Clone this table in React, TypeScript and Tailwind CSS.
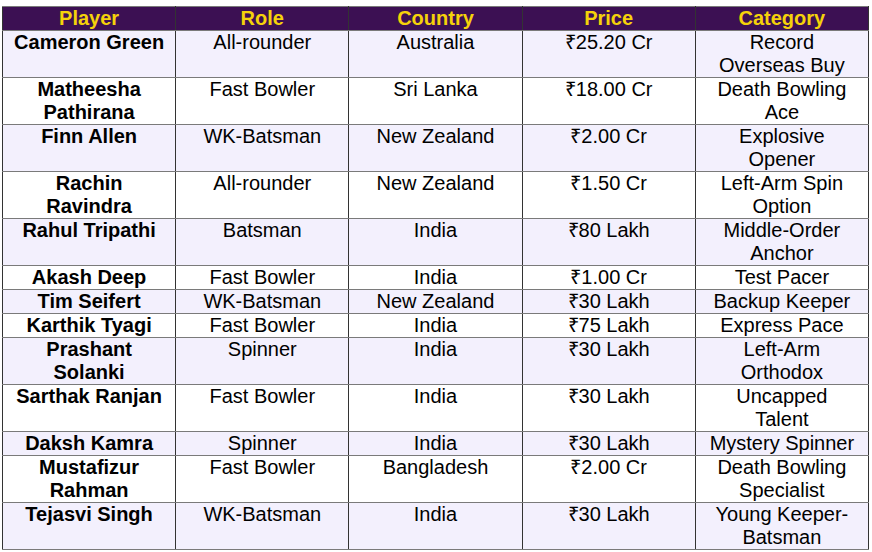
const rows: [string, string, string, string, string][] = [
  ['Cameron Green', 'All-rounder', 'Australia', '₹25.20 Cr', 'Record Overseas Buy'],
  ['Matheesha Pathirana', 'Fast Bowler', 'Sri Lanka', '₹18.00 Cr', 'Death Bowling Ace'],
  ['Finn Allen', 'WK-Batsman', 'New Zealand', '₹2.00 Cr', 'Explosive Opener'],
  ['Rachin Ravindra', 'All-rounder', 'New Zealand', '₹1.50 Cr', 'Left-Arm Spin Option'],
  ['Rahul Tripathi', 'Batsman', 'India', '₹80 Lakh', 'Middle-Order Anchor'],
  ['Akash Deep', 'Fast Bowler', 'India', '₹1.00 Cr', 'Test Pacer'],
  ['Tim Seifert', 'WK-Batsman', 'New Zealand', '₹30 Lakh', 'Backup Keeper'],
  ['Karthik Tyagi', 'Fast Bowler', 'India', '₹75 Lakh', 'Express Pace'],
  ['Prashant Solanki', 'Spinner', 'India', '₹30 Lakh', 'Left-Arm Orthodox'],
  // the reference wraps this one although it would just fit
  ['Sarthak Ranjan', 'Fast Bowler', 'India', '₹30 Lakh', 'Uncapped\nTalent'],
  ['Daksh Kamra', 'Spinner', 'India', '₹30 Lakh', 'Mystery Spinner'],
  ['Mustafizur Rahman', 'Fast Bowler', 'Bangladesh', '₹2.00 Cr', 'Death Bowling Specialist'],
  ['Tejasvi Singh', 'WK-Batsman', 'India', '₹30 Lakh', 'Young Keeper-Batsman'],
];

const headers = ['Player', 'Role', 'Country', 'Price', 'Category'];

export default function App() {
  return (
    <div className="min-h-screen bg-white pl-[2px] pt-[6px] font-['Liberation_Sans',Arial,sans-serif] text-[20px] leading-[23px] text-black">
      <table className="w-[867px] table-fixed border-collapse border border-[#666]">
        <thead>
          <tr className="bg-[#3c1053]">
            {headers.map((h) => (
              <th key={h} className="border border-x-[#333] border-y-[#7a7a7a] px-[11px] py-0 text-center align-top font-bold text-[#f5d20a]">
                {h}
              </th>
            ))}
          </tr>
        </thead>
        <tbody>
          {rows.map((r, i) => (
            <tr key={r[0]} className={i % 2 === 0 ? 'bg-[#f3f0fd]' : 'bg-white'}>
              {r.map((c, j) => (
                <td
                  key={j}
                  className={`whitespace-pre-line border border-x-[#333] border-y-[#7a7a7a] px-[11px] py-0 text-center align-top ${j === 0 ? 'font-bold' : 'font-normal'}`}
                >
                  {c}
                </td>
              ))}
            </tr>
          ))}
        </tbody>
      </table>
    </div>
  );
}
